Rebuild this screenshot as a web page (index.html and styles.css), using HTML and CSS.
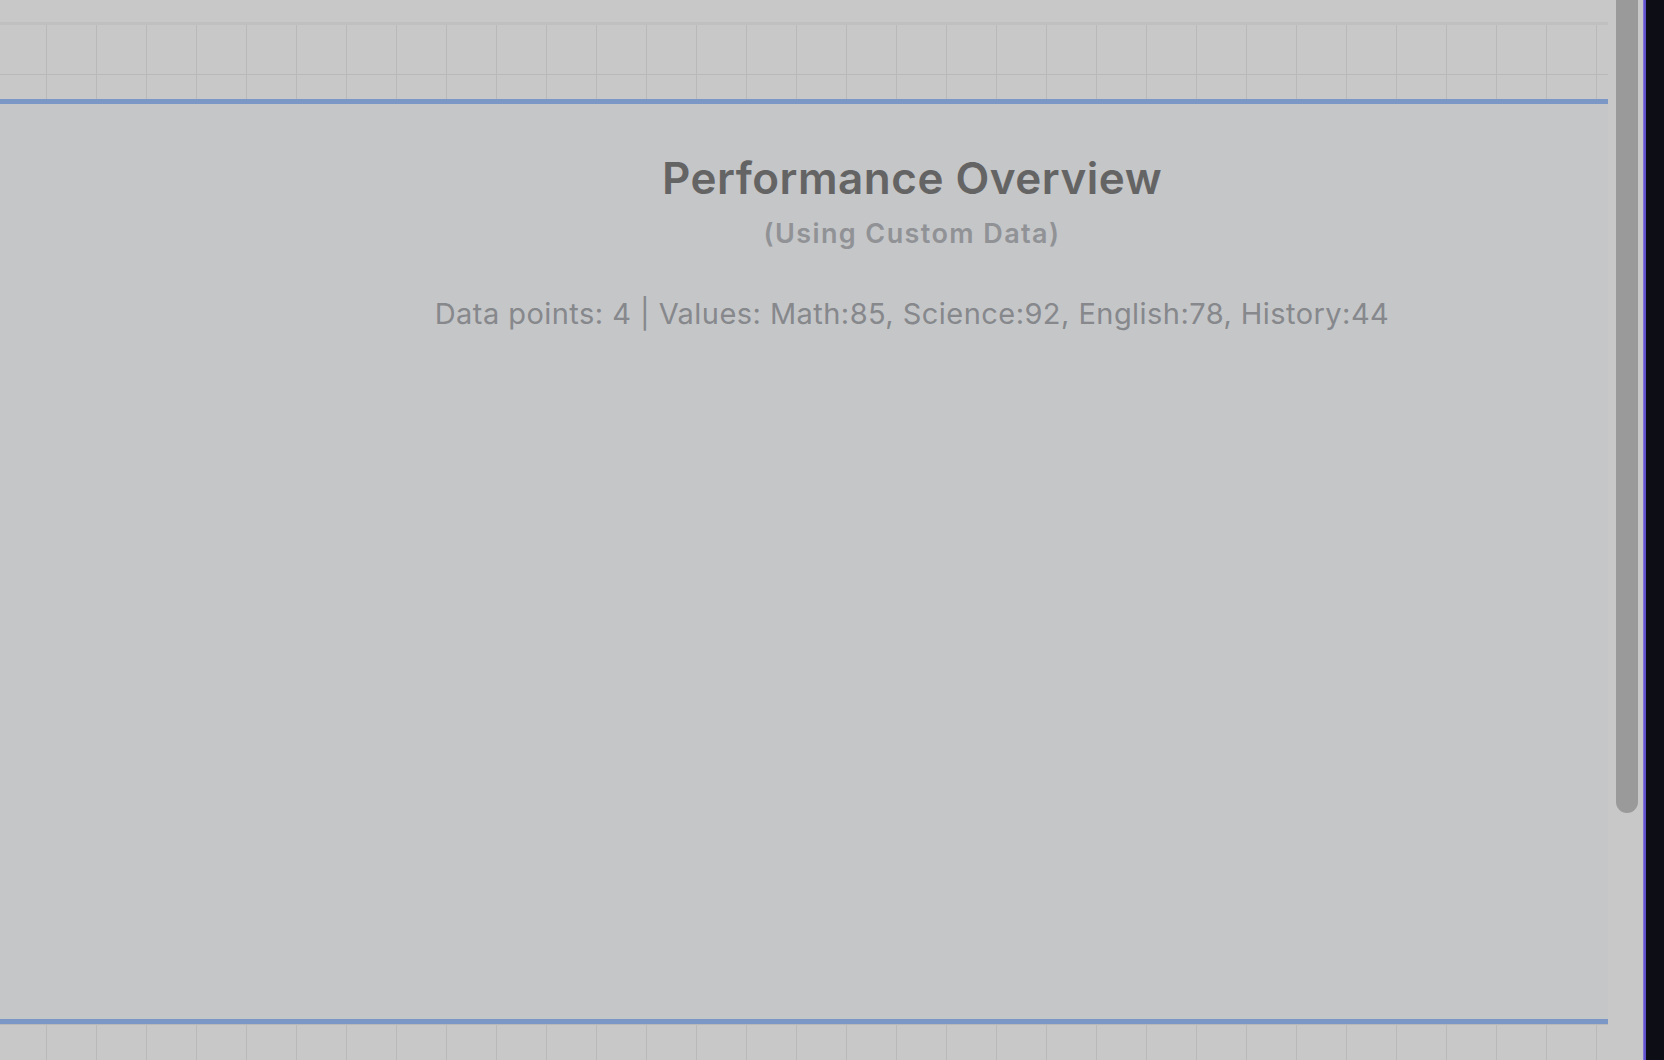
FILE: index.html
```html
<!DOCTYPE html>
<html lang="en">
<head>
<meta charset="utf-8">
<title>Performance Overview</title>
<link rel="stylesheet" href="styles.css">
</head>
<body>
<div class="app">
  <div class="main">
    <div class="topstrip"></div>
    <div class="canvas">
      <section class="card">
        <h1 class="title">Performance Overview</h1>
        <p class="subtitle">(Using Custom Data)</p>
        <p class="meta">Data points: 4 | Values: Math:85, Science:92, English:78, History:44</p>
      </section>
    </div>
  </div>
  <div class="gutter"><div class="thumb"></div></div>
  <div class="edge"></div>
  <div class="dark"></div>
</div>
</body>
</html>
```
FILE: styles.css
```css
html, body {
  margin: 0;
  padding: 0;
  height: 100%;
  overflow: hidden;
}
body {
  background: #c8c8c8;
  font-family: Inter, "Noto Sans", sans-serif;
}
.app {
  display: flex;
  height: 1060px;
}
.main {
  width: 1608px;
  flex: none;
  display: flex;
  flex-direction: column;
  overflow: hidden;
}
.topstrip {
  height: 22px;
  flex: none;
  background: #c8c8c8;
}
.canvas {
  flex: 1;
  border-top: 3px solid #c0c0c0;
  background-color: #c8c8c8;
  background-image:
    linear-gradient(to bottom, transparent 48px, #b9b9b9 48px, #b9b9b9 49px, transparent 49px),
    linear-gradient(to right, transparent 46px, #b9b9b9 46px, #b9b9b9 47px, transparent 47px);
  background-size: 50px 50px;
  background-position: 0 1px;
  padding-top: 74px;
}
.card {
  box-sizing: border-box;
  height: 925px;
  border-top: 5px solid #7a97c6;
  border-bottom: 5px solid #7a97c6;
  background: #c5c6c8;
  padding-left: 216px;
  padding-top: 48px;
  text-align: center;
}
.title {
  margin: 0;
  font-size: 44px;
  font-weight: 600;
  letter-spacing: 0.5px;
  line-height: 52px;
  color: #646464;
}
.subtitle {
  margin: 15px 0 0;
  font-size: 27px;
  font-weight: 600;
  letter-spacing: 1.4px;
  line-height: 30px;
  color: #909296;
}
.meta {
  margin: 47px 0 0;
  font-size: 29px;
  font-weight: 400;
  letter-spacing: 0.45px;
  line-height: 35px;
  color: #86888c;
}
.gutter {
  width: 35px;
  flex: none;
  background: #c8c8c8;
  padding: 0 5px 0 8px;
  box-sizing: border-box;
}
.thumb {
  height: 813px;
  background: #9a9a9a;
  border-radius: 0 0 11px 11px;
}
.edge {
  width: 3px;
  flex: none;
  background: linear-gradient(to right, #9a8fe0 0, #6656d0 1px, #5a4bc8 100%);
}
.dark {
  flex: 1;
  background: #0d0e15;
}
```
